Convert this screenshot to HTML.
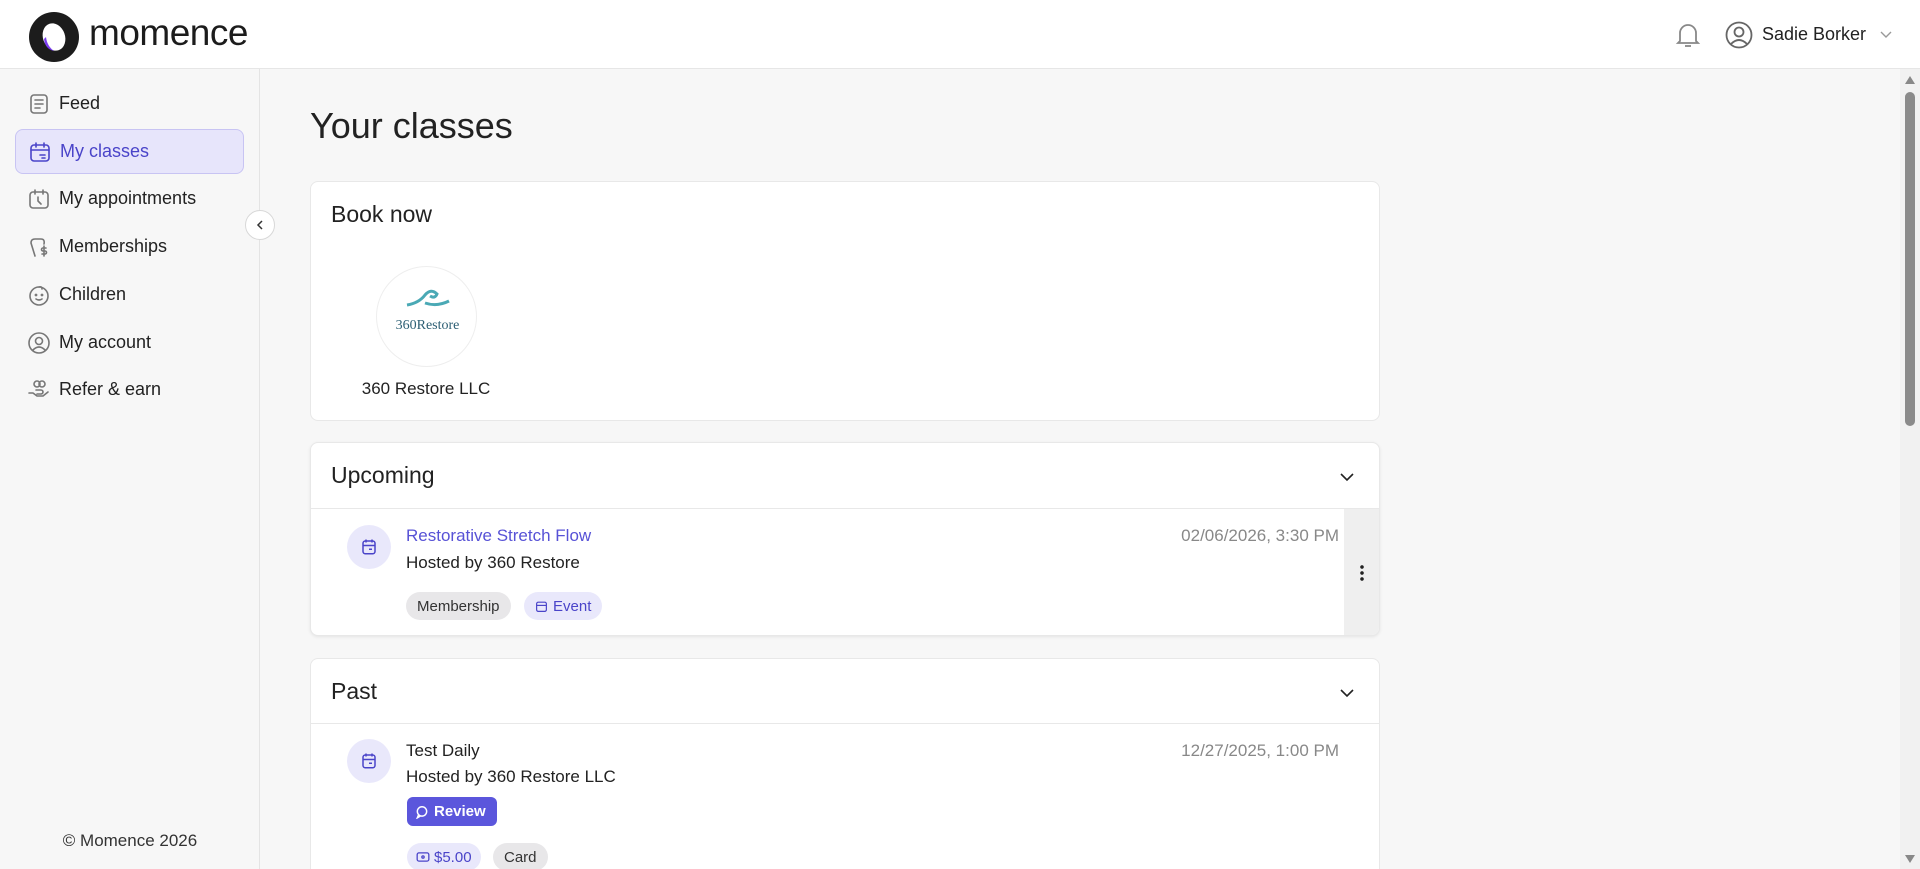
<!DOCTYPE html>
<html style="width:1920px;height:869px;overflow:hidden"><head><meta charset="utf-8"><style>
*{box-sizing:border-box;margin:0;padding:0}
body{width:1920px;height:869px;overflow:hidden;background:#f7f7f7;font-family:"Liberation Sans",sans-serif;color:#1f1f1f;position:relative}
.hdr{position:absolute;left:0;top:0;width:1920px;height:69px;background:#fff;border-bottom:1px solid #e6e6e6}
.side{position:absolute;left:0;top:69px;width:260px;height:800px;border-right:1px solid #e4e4e4;background:#f7f7f7}
.nav{position:absolute;left:15px;width:229px;height:45px;display:flex;align-items:center;font-size:18px;color:#222}
.nav svg{position:absolute;left:12px;width:24px;height:24px;fill:none;stroke:#777;stroke-width:1.6;stroke-linecap:round;stroke-linejoin:round}
.nav span{position:absolute;left:44px}
.nav.act{background:#e7e5fb;border:1px solid #c8c4f3;border-radius:8px;color:#4a44c9}
.nav.act svg{stroke:#4a44c9}
.card{position:absolute;left:310px;width:1070px;background:#fff;border:1px solid #e8e8e8;border-radius:8px;overflow:hidden}
.ct{position:absolute;left:20px;font-size:23px;color:#222}
.chev{position:absolute;right:24px;width:16px;height:16px}
.ic{position:absolute;left:36px;width:44px;height:44px;border-radius:50%;background:#e9e8fb;display:flex;align-items:center;justify-content:center}
.badge{position:absolute;height:28px;border-radius:14px;font-size:15px;display:flex;align-items:center;padding:0 11px}
</style></head><body>
<div class="hdr">
<svg style="position:absolute;left:29px;top:12px" width="50" height="50" viewBox="0 0 50 50"><circle cx="25" cy="25" r="25" fill="#1c1c1c"/><ellipse cx="25" cy="25" rx="11" ry="14" fill="#fff" transform="rotate(-20 25 25)"/><path d="M15 27 Q16 37 25 39 Q18 34 17 25Z" fill="#7b3cf0"/></svg>
<div style="position:absolute;left:89px;top:12px;font-size:37px;letter-spacing:-0.5px;color:#1c1c1c">momence</div>
<svg style="position:absolute;left:1675px;top:21px" width="26" height="28" viewBox="0 0 26 28" fill="none" stroke="#888" stroke-width="1.8"><path d="M5 20 V12 a8 8 0 0 1 16 0 V20 L23 22 H3 Z"/><path d="M10 25 h6"/></svg>
<svg style="position:absolute;left:1725px;top:21px" width="28" height="28" viewBox="0 0 28 28" fill="none" stroke="#666" stroke-width="1.8"><circle cx="14" cy="14" r="12.5"/><circle cx="14" cy="11" r="4.5"/><path d="M6 23 q8-8 16 0"/></svg>
<div style="position:absolute;left:1762px;top:24px;font-size:18px;color:#222">Sadie Borker</div>
<svg style="position:absolute;left:1879px;top:30px" width="14" height="9" viewBox="0 0 14 9" fill="none" stroke="#999" stroke-width="1.4"><path d="M2 2 L7 7 L12 2"/></svg>
</div>
<div class="side">
<div class="nav" style="top:12px"><svg viewBox="0 0 24 24"><rect x="4" y="3" width="16" height="18" rx="3"/><path d="M8 8h8M8 12h8M8 16h5"/></svg><span>Feed</span></div>
<div class="nav act" style="top:60px"><svg viewBox="0 0 24 24"><rect x="3" y="5" width="18" height="16" rx="3"/><path d="M8 3v4M16 3v4M3 10h18M12 15h5M14 18h3"/></svg><span>My classes</span></div>
<div class="nav" style="top:107px"><svg viewBox="0 0 24 24"><rect x="3" y="5" width="18" height="16" rx="3"/><path d="M8 3v4M16 3v4M11 10v4l3 3"/></svg><span>My appointments</span></div>
<div class="nav" style="top:155px"><svg viewBox="0 0 24 24"><path d="M8 21 L4 8 Q4 4 8 4 H14 Q18 4 17 9"/><path d="M19 13 h-3 a1.5 1.5 0 0 0 0 3 h2 a1.5 1.5 0 0 1 0 3 h-3M17 11v10"/></svg><span>Memberships</span></div>
<div class="nav" style="top:203px"><svg viewBox="0 0 24 24"><circle cx="12" cy="13" r="9"/><path d="M12 4 q3-1 3 2M9 16q3 2 6 0"/><circle cx="9" cy="12" r=".6"/><circle cx="15" cy="12" r=".6"/></svg><span>Children</span></div>
<div class="nav" style="top:251px"><svg viewBox="0 0 24 24"><circle cx="12" cy="12" r="10"/><circle cx="12" cy="10" r="3.5"/><path d="M6 19q6-6 12 0"/></svg><span>My account</span></div>
<div class="nav" style="top:298px"><svg viewBox="0 0 24 24"><circle cx="10" cy="6" r="3"/><circle cx="15" cy="6" r="3"/><path d="M2 15h4l4 3h6l5-4M9 12h5a2 2 0 0 1 0 4h-4"/></svg><span>Refer &amp; earn</span></div>
<div style="position:absolute;left:245px;top:141px;width:30px;height:30px;border-radius:50%;background:#fff;border:1px solid #d8d8d8"><svg style="position:absolute;left:9px;top:8px" width="10" height="12" viewBox="0 0 10 12" fill="none" stroke="#333" stroke-width="1.5"><path d="M7 2 L3 6 L7 10"/></svg></div>
<div style="position:absolute;left:0;width:260px;text-align:center;top:762px;font-size:17px;color:#333">© Momence 2026</div>
</div>
<div style="position:absolute;left:310px;top:105px;font-size:36px;color:#222">Your classes</div>
<div class="card" style="top:181px;height:240px">
<div class="ct" style="top:19px">Book now</div>
<div style="position:absolute;left:65px;top:84px;width:101px;height:101px;border-radius:50%;border:1px solid #eee;background:#fff">
<svg style="position:absolute;left:28px;top:22px" width="46" height="20" viewBox="0 0 46 20" fill="none" stroke="#4aa9b5" stroke-width="3"><path d="M2 16 Q14 14 20 6 Q26 -1 32 5 Q30 10 25 7 M20 14 Q32 18 44 12"/></svg>
<div style="position:absolute;left:0;width:101px;text-align:center;top:51px;font-family:'Liberation Serif',serif;font-size:14px;color:#2d5f74">360Restore</div>
</div>
<div style="position:absolute;left:40px;width:150px;text-align:center;top:197px;font-size:17px;color:#222">360 Restore LLC</div>
</div>
<div class="card" style="top:442px;height:194px;box-shadow:0 1px 3px rgba(0,0,0,.08)">
<div class="ct" style="top:19px">Upcoming</div>
<svg class="chev" style="top:26px" viewBox="0 0 16 16" fill="none" stroke="#222" stroke-width="1.6"><path d="M2 5 L8 11 L14 5"/></svg>
<div style="position:absolute;left:0;top:65px;width:1070px;border-top:1px solid #e8e8e8"></div>
<div style="position:absolute;left:1033px;top:66px;width:37px;height:128px;background:#efefef"></div>
<div style="position:absolute;left:1049px;top:121px;width:4px;height:18px;background:radial-gradient(circle,#222 1.6px,transparent 2px) 0 0/4px 6px"></div>
<div class="ic" style="top:82px"><svg width="18" height="18" viewBox="0 0 24 24" fill="none" stroke="#4a44c9" stroke-width="2"><rect x="4" y="4" width="16" height="17" rx="3"/><path d="M8 2v4M16 2v4M4 10h16M12 15h4"/></svg></div>
<div style="position:absolute;left:95px;top:83px;font-size:17px;color:#5752d6">Restorative Stretch Flow</div>
<div style="position:absolute;left:95px;top:110px;font-size:17px;color:#222">Hosted by 360 Restore</div>
<div style="position:absolute;right:40px;top:83px;font-size:17px;color:#888">02/06/2026, 3:30 PM</div>
<div class="badge" style="left:95px;top:149px;background:#e8e7e9;color:#333">Membership</div>
<div class="badge" style="left:213px;top:149px;background:#e9e8fb;color:#4a44c9"><svg width="13" height="13" viewBox="0 0 24 24" fill="none" stroke="#4a44c9" stroke-width="2.2" style="margin-right:5px"><rect x="3" y="4" width="18" height="17" rx="3"/><path d="M3 10h18"/></svg>Event</div>
</div>
<div class="card" style="top:658px;height:230px;border-bottom:none;border-radius:8px 8px 0 0">
<div class="ct" style="top:19px">Past</div>
<svg class="chev" style="top:26px" viewBox="0 0 16 16" fill="none" stroke="#222" stroke-width="1.6"><path d="M2 5 L8 11 L14 5"/></svg>
<div style="position:absolute;left:0;top:64px;width:1070px;border-top:1px solid #e8e8e8"></div>
<div class="ic" style="top:80px"><svg width="18" height="18" viewBox="0 0 24 24" fill="none" stroke="#4a44c9" stroke-width="2"><rect x="4" y="4" width="16" height="17" rx="3"/><path d="M8 2v4M16 2v4M4 10h16M12 15h4"/></svg></div>
<div style="position:absolute;left:95px;top:82px;font-size:17px;color:#222">Test Daily</div>
<div style="position:absolute;left:95px;top:108px;font-size:17px;color:#222">Hosted by 360 Restore LLC</div>
<div style="position:absolute;right:40px;top:82px;font-size:17px;color:#888">12/27/2025, 1:00 PM</div>
<div style="position:absolute;left:96px;top:138px;width:90px;height:29px;border-radius:6px;background:#5b56dc;color:#fff;font-size:15px;font-weight:bold;display:flex;align-items:center;padding-left:8px"><svg width="14" height="14" viewBox="0 0 24 24" fill="none" stroke="#fff" stroke-width="2.5" style="margin-right:5px"><circle cx="12" cy="11" r="8"/><path d="M6 17 L4 22 L9 19"/></svg>Review</div>
<div class="badge" style="left:96px;top:184px;background:#e9e8fb;color:#4a44c9;padding:0 9px"><svg width="14" height="12" viewBox="0 0 24 20" fill="none" stroke="#4a44c9" stroke-width="2.2" style="margin-right:4px"><rect x="2" y="3" width="20" height="14" rx="3"/><circle cx="12" cy="10" r="2"/></svg>$5.00</div>
<div class="badge" style="left:182px;top:184px;background:#e8e7e9;color:#333">Card</div>
</div>
<div style="position:absolute;left:1900px;top:69px;width:20px;height:800px;background:#f1f1f1"></div>
<div style="position:absolute;left:1905px;top:76px;width:0;height:0;border-left:5px solid transparent;border-right:5px solid transparent;border-bottom:8px solid #888"></div>
<div style="position:absolute;left:1905px;top:92px;width:10px;height:334px;border-radius:5px;background:#8a8a8a"></div>
<div style="position:absolute;left:1905px;top:855px;width:0;height:0;border-left:5px solid transparent;border-right:5px solid transparent;border-top:8px solid #888"></div>
</body></html>
